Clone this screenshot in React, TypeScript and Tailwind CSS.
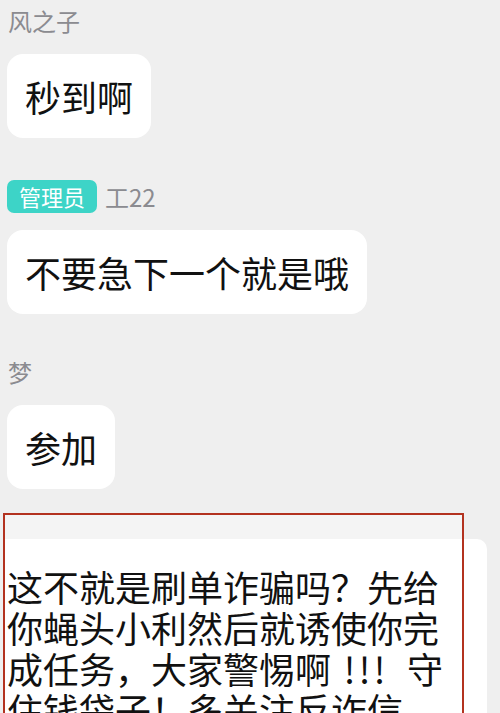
const Bubble = ({ text }: { text: string }) => (
    <div className="mt-[17px] rounded-[16px] bg-white px-[18px] py-[18px] text-[36px] leading-[48px] text-[#111] whitespace-nowrap">
        {text}
    </div>
);

const Name = ({ children, className = '' }: { children: React.ReactNode; className?: string }) => (
    <div className={`text-[24px] leading-[32px] text-[#8b8b90] pl-[1px] ${className}`}>{children}</div>
);

const App = () => {
    return (
        <div className="w-[500px] h-[713px] overflow-hidden bg-[#efefef] font-['Noto_Sans_CJK_SC','Noto_Sans',sans-serif]">
            <div className="flex flex-col items-start px-[7px] pt-[5px]">
                <Name>风之子</Name>
                <Bubble text="秒到啊" />

                <div className="mt-[42px] flex h-[33px] items-center gap-[8px]">
                    <span className="rounded-[7px] bg-[#3dd4c7] px-[12px] text-[22px] leading-[33px] text-white">管理员</span>
                    <span className="text-[24px] leading-[32px] text-[#8b8b90]">工22</span>
                </div>
                <Bubble text="不要急下一个就是哦" />

                <Name className="mt-[42px]">梦</Name>
                <Bubble text="参加" />
            </div>

            <div className="relative mt-[24px]">
                <div className="ml-[5px] h-[26px] w-[457px] bg-[#f4f4f4]" />
                <div className="ml-[5px] w-[482px] rounded-tr-[10px] bg-white pt-[27px] pl-[2px] text-[36px] leading-[41px] text-[#111] whitespace-nowrap">
                    <div>这不就是刷单诈骗吗？先给</div>
                    <div>你蝇头小利然后就诱使你完</div>
                    <div className="flex">
                        <span>成任务，大家警惕啊</span>
                        <span className="ml-[11px] flex">
                            <span className="inline-block w-[15px] text-center">!</span>
                            <span className="inline-block w-[15px] text-center">!</span>
                            <span className="inline-block w-[15px] text-center">!</span>
                        </span>
                        <span className="ml-[20px]">守</span>
                    </div>
                    <div>住钱袋子！多关注反诈信</div>
                    <div className="h-[40px]" />
                </div>
                {/* annotation frame drawn over the last message */}
                <div className="pointer-events-none absolute left-[3px] top-0 h-[260px] w-[461px] border-2 border-[#b3321f]" />
            </div>
        </div>
    );
};

export default App;
